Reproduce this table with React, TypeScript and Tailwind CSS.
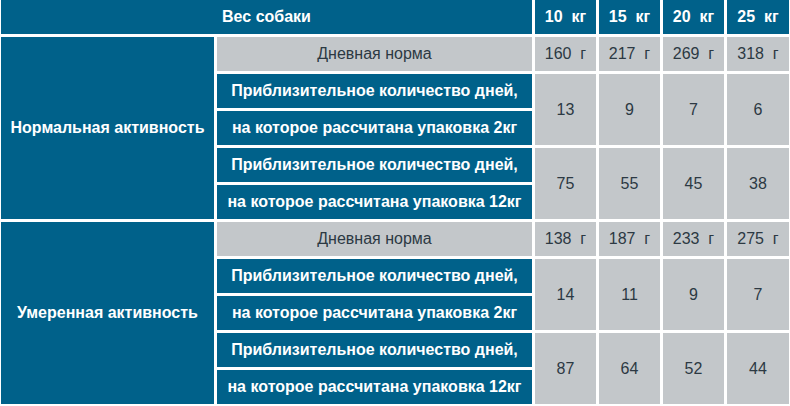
import React from 'react';

const blue = 'bg-[#00618a] text-white font-bold';
const gray = 'bg-[#c3c7ca] text-[#2c3943]';

type Group = {
  title: string;
  norm: string[];
  pack2: string[];
  pack12: string[];
};

const groups: Group[] = [
  {
    title: 'Нормальная активность',
    norm: ['160  г', '217  г', '269  г', '318  г'],
    pack2: ['13', '9', '7', '6'],
    pack12: ['75', '55', '45', '38'],
  },
  {
    title: 'Умеренная активность',
    norm: ['138  г', '187  г', '233  г', '275  г'],
    pack2: ['14', '11', '9', '7'],
    pack12: ['87', '64', '52', '44'],
  },
];

const Cell: React.FC<{ className?: string; children: React.ReactNode }> = ({ className = '', children }) => (
  <div className={`flex items-center justify-center text-center whitespace-pre ${className}`}>{children}</div>
);

const App: React.FC = () => {
  return (
    <div
      className="w-[790px] h-[406px] overflow-hidden bg-white pl-[1px] text-[16px]"
      style={{ fontFamily: '"Liberation Sans", Arial, sans-serif' }}
    >
      <div className="grid grid-cols-[213px_315px_61px_61px_61px_62px] auto-rows-[34px] gap-[3px]">
        {/* Header */}
        <Cell className={`${blue} col-span-2`}>Вес собаки</Cell>
        {['10  кг', '15  кг', '20  кг', '25  кг'].map((w) => (
          <Cell key={w} className={blue}>{w}</Cell>
        ))}

        {groups.map((g) => (
          <React.Fragment key={g.title}>
            <Cell className={`${blue} row-span-5`}>{g.title}</Cell>
            <Cell className={gray}>Дневная норма</Cell>
            {g.norm.map((v, i) => (
              <Cell key={'n' + i} className={gray}>{v}</Cell>
            ))}

            <Cell className={blue}>Приблизительное количество дней,</Cell>
            {g.pack2.map((v, i) => (
              <Cell key={'a' + i} className={`${gray} row-span-2`}>{v}</Cell>
            ))}
            <Cell className={blue}>на которое рассчитана упаковка 2кг</Cell>

            <Cell className={blue}>Приблизительное количество дней,</Cell>
            {g.pack12.map((v, i) => (
              <Cell key={'b' + i} className={`${gray} row-span-2`}>{v}</Cell>
            ))}
            <Cell className={blue}>на которое рассчитана упаковка 12кг</Cell>
          </React.Fragment>
        ))}
      </div>
    </div>
  );
};

export default App;
